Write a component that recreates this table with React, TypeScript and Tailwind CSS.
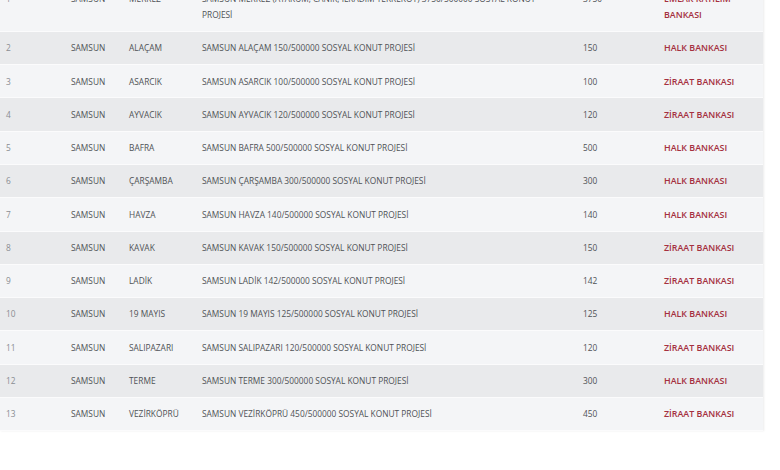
import React from "react";

type Row = [string, string, string, string, string];

const rows: Row[] = [
  ["1", "MERKEZ", "SAMSUN MERKEZ (ATAKUM, CANİK, İLKADIM TEKKEKÖY) 3750/500000 SOSYAL KONUT\nPROJESİ", "3750", "EMLAK KATILIM BANKASI"],
  ["2", "ALAÇAM", "SAMSUN ALAÇAM 150/500000 SOSYAL KONUT PROJESİ", "150", "HALK BANKASI"],
  ["3", "ASARCIK", "SAMSUN ASARCIK 100/500000 SOSYAL KONUT PROJESİ", "100", "ZİRAAT BANKASI"],
  ["4", "AYVACIK", "SAMSUN AYVACIK 120/500000 SOSYAL KONUT PROJESİ", "120", "ZİRAAT BANKASI"],
  ["5", "BAFRA", "SAMSUN BAFRA 500/500000 SOSYAL KONUT PROJESİ", "500", "HALK BANKASI"],
  ["6", "ÇARŞAMBA", "SAMSUN ÇARŞAMBA 300/500000 SOSYAL KONUT PROJESİ", "300", "HALK BANKASI"],
  ["7", "HAVZA", "SAMSUN HAVZA 140/500000 SOSYAL KONUT PROJESİ", "140", "HALK BANKASI"],
  ["8", "KAVAK", "SAMSUN KAVAK 150/500000 SOSYAL KONUT PROJESİ", "150", "ZİRAAT BANKASI"],
  ["9", "LADİK", "SAMSUN LADİK 142/500000 SOSYAL KONUT PROJESİ", "142", "ZİRAAT BANKASI"],
  ["10", "19 MAYIS", "SAMSUN 19 MAYIS 125/500000 SOSYAL KONUT PROJESİ", "125", "HALK BANKASI"],
  ["11", "SALIPAZARI", "SAMSUN SALIPAZARI 120/500000 SOSYAL KONUT PROJESİ", "120", "ZİRAAT BANKASI"],
  ["12", "TERME", "SAMSUN TERME 300/500000 SOSYAL KONUT PROJESİ", "300", "HALK BANKASI"],
  ["13", "VEZİRKÖPRÜ", "SAMSUN VEZİRKÖPRÜ 450/500000 SOSYAL KONUT PROJESİ", "450", "ZİRAAT BANKASI"],
];

export default function App() {
  return (
    <div
      className="w-[780px] h-[470px] overflow-hidden bg-white"
      style={{ fontFamily: '"Open Sans", "Noto Sans", sans-serif' }}
    >
      <div className="w-[763px] -mt-[17px] shadow-[1px_0_2px_rgba(0,0,0,0.08)]">
        <table className="w-[763px] table-fixed border-collapse text-[8.35px] leading-[15.6px] text-[#4f5256]">
          <colgroup>
            <col className="w-[65px]" />
            <col className="w-[58px]" />
            <col className="w-[73px]" />
            <col className="w-[381px]" />
            <col className="w-[81px]" />
            <col className="w-[105px]" />
          </colgroup>
          <tbody>
            {rows.map((r, i) => (
              <tr
                key={r[0]}
                className={
                  (i % 2 === 0 ? "bg-[#f4f5f7]" : "bg-[#e9eaec]") +
                  " border-b border-[#fbfbfc]"
                }
              >
                <td className="px-[6px] py-[8.35px] align-top text-[#8a8d92]">{r[0]}</td>
                <td className="px-[6px] py-[8.35px] align-top">SAMSUN</td>
                <td className="px-[6px] py-[8.35px] align-top">{r[1]}</td>
                <td className="px-[6px] py-[8.35px] align-top whitespace-pre-line">{r[2]}</td>
                <td className="px-[6px] py-[8.35px] align-top">{r[3]}</td>
                <td className="px-[6px] py-[8.35px] align-top text-[8.9px] font-semibold text-[#a5303f]">{r[4]}</td>
              </tr>
            ))}
          </tbody>
        </table>
      </div>
    </div>
  );
}
